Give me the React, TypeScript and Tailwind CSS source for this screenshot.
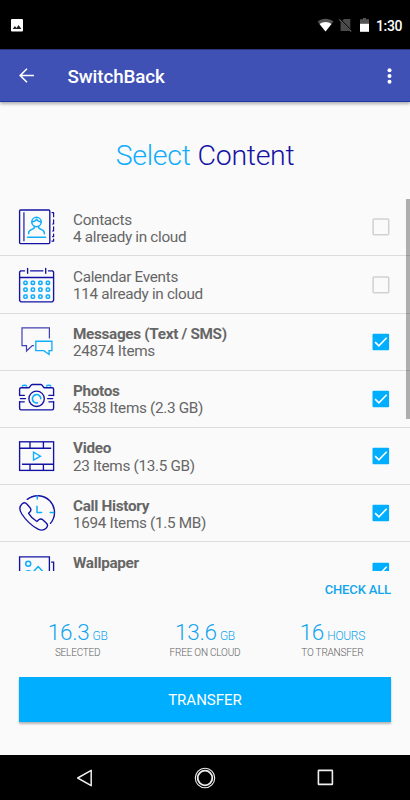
import { useState, type ReactNode } from "react";

const NAVY = "#1212a4";
const SKY = "#12adfb";

function ItemIcon({ children }: { children: ReactNode }) {
  return (
    <svg
      className="h-[38px] w-[38px] shrink-0"
      viewBox="0 0 38 38"
      fill="none"
      stroke={NAVY}
      strokeWidth={1.35}
      strokeLinecap="round"
      strokeLinejoin="round"
    >
      {children}
    </svg>
  );
}

function ContactsIcon() {
  return (
    <ItemIcon>
      <rect x="1.6" y="2" width="30.2" height="33.6" rx="1" />
      <path d="M5.9 4.8v27.8" strokeWidth={1.8} opacity={0.65} />
      <path d="M34 4.6h1.6v4.2M35.6 11.8v4.2h-1M35.6 18.8v4.2h-1M35.6 26v2.6h-1M35.6 31v2.2H34" strokeWidth={1.2} />
      <g stroke={SKY} strokeWidth={1.5}>
        <circle cx="18.5" cy="14" r="4.7" />
        <path d="M14 13.8c2.4 0 3.8-1.1 4.5-2.6.8 1.5 2.2 2.6 4.5 2.6M16.3 18.3v1.5c-.9 1.8-5.6 1.6-5.6 4.6v1.4M20.7 18.3v1.5c.9 1.8 5.6 1.6 5.6 4.6v1.4" />
        <path d="M9.5 29.2h18" />
      </g>
    </ItemIcon>
  );
}

function CalendarIcon() {
  const cols = [7.5, 14.9, 22.4, 29.9];
  const rows = [16.8, 23.6, 30.6];
  return (
    <ItemIcon>
      <path d="M6.6 4.8H2.8L1.6 6v28.6l1.2 1.2h31.6l1.2-1.2V6l-1.2-1.2h-3.9M12.5 4.8h12.4M1.6 11.5h34" />
      <path d="M9.6 2.3v4.9M27.7 2.3v4.9" />
      <g stroke={SKY} strokeWidth={1.6}>
        {rows.map((y) =>
          cols.map((x) => <rect key={`${x}-${y}`} x={x - 1.6} y={y - 1.6} width="3.2" height="3.2" rx="1" />)
        )}
      </g>
    </ItemIcon>
  );
}

function MessagesIcon() {
  return (
    <ItemIcon>
      <path
        d="M31.4 15.6V4.8H4v17.8h4.5V28l5.8-5.4h1.6"
        strokeWidth={1.2}
        strokeLinecap="butt"
        strokeLinejoin="miter"
        opacity={0.8}
      />
      <path d="M17.8 18.2h16.1v9.4h-2.8v3.9l-5.2-3.9h-8.1z" stroke={SKY} strokeLinejoin="miter" />
    </ItemIcon>
  );
}

function PhotosIcon() {
  return (
    <ItemIcon>
      <path d="M1.6 14.8V9.2c0-1 .5-1.5 1.5-1.5h7.6c1.6 0 1.7-3.2 3.6-3.2h8.5c1.9 0 2 3.2 3.6 3.2h7.7c1 0 1.5.5 1.5 1.5v5.6M1.6 22.5v5.8c0 1 .5 1.5 1.5 1.5h31c1 0 1.5-.5 1.5-1.5v-5.8M1.6 14.6v1M1.6 21.6v1M35.6 14.6v1M35.6 21.6v1" />
      <path d="M1.6 15.4h4.7M2.4 18.6h5.1M1.6 21.8h4.7M30.9 15.4h4.7M29.6 18.6h5.1M30.9 21.8h4.7" />
      <circle cx="18.6" cy="18.8" r="7.7" />
      <path d="M19.4 22.9a4.2 4.2 0 1 1 3.4-4.3M4.5 6c.2-1.1 3.8-1.1 4 0M28.7 6c.2-1.1 3.8-1.1 4 0" stroke={SKY} strokeWidth={1.6} />
    </ItemIcon>
  );
}

function VideoIcon() {
  return (
    <ItemIcon>
      <g strokeLinecap="butt" strokeLinejoin="miter">
        <rect x="1.6" y="4.8" width="34" height="28.6" />
        <path d="M1.6 11.2h31.6M4 27.2h31.6M12 4.8v6.4M25.4 4.8v6.4M12 27.2v6.2M25.4 27.2v6.2" />
        <path d="M15.5 15.2v8l7-4z" stroke={SKY} />
      </g>
    </ItemIcon>
  );
}

function CallIcon() {
  return (
    <ItemIcon>
      <path d="M9.2 5.4A16.8 16.8 0 0 1 32.5 29.4" />
      <path d="M4.2 9.8C1 12.6 1.2 16 3.8 20c4.3 6.6 9.7 11.7 16.3 15.2 3.4 1.7 5.8 1.2 8-.9 2-1.9 2-3.3.4-5l-3.2-3c-1.9-1.7-3.7-1.6-5.4.2l-1 1c-3.7-2.2-6.4-5-8.3-8.2l1.2-1.2c1.5-1.5 1.5-3 .1-4.6L8.8 10C7.3 8.3 5.8 8.4 4.2 9.8z" />
      <path d="M19.3 1.9v3M35.6 18.5h-3.4M19 12.2v6.4h4.6" stroke={SKY} strokeWidth={1.5} />
    </ItemIcon>
  );
}

function WallpaperIcon() {
  return (
    <ItemIcon>
      <path d="M1.6 36V4.9h29.8V30H1.6M33.6 10.1h2V36" strokeLinejoin="miter" />
      <g stroke={SKY} strokeWidth={1.5}>
        <circle cx="10.2" cy="11.7" r="2.5" />
        <path d="M7.6 19.6c1.5-1 3.8-1 5.3 0M15.5 19.6l4.7-5.1 5.2 5.6" />
      </g>
    </ItemIcon>
  );
}

const items = [
  { name: "Contacts", detail: "4 already in cloud", icon: <ContactsIcon />, selected: false },
  { name: "Calendar Events", detail: "114 already in cloud", icon: <CalendarIcon />, selected: false },
  { name: "Messages (Text / SMS)", detail: "24874 Items", icon: <MessagesIcon />, selected: true },
  { name: "Photos", detail: "4538 Items (2.3 GB)", icon: <PhotosIcon />, selected: true },
  { name: "Video", detail: "23 Items (13.5 GB)", icon: <VideoIcon />, selected: true },
  { name: "Call History", detail: "1694 Items (1.5 MB)", icon: <CallIcon />, selected: true },
  { name: "Wallpaper", detail: "", icon: <WallpaperIcon />, selected: true },
];

const totals = [
  { value: "16.3", unit: "GB", label: "SELECTED" },
  { value: "13.6", unit: "GB", label: "FREE ON CLOUD" },
  { value: "16", unit: "HOURS", label: "TO TRANSFER" },
];

function StatusBar() {
  return (
    <div className="flex h-[49px] shrink-0 items-center bg-black pt-[1px] pr-[8px] pl-[11px] text-white">
      <svg className="h-[13px] w-[12px]" viewBox="0 0 12 13">
        <rect width="12" height="12.5" rx="1" fill="#fff" />
        <path d="M1.7 10.1l2.2-3 1.6 1.9 2.1-3 2.8 4.1z" fill="#222" />
      </svg>
      <svg className="ml-auto h-[14px] w-[17px]" viewBox="0 0 17 14">
        <path d="M8.5 13.5L.6 3.6c4.7-3.8 11.1-3.8 15.8 0z" fill="#555" />
        <path d="M8.5 13.5L2.5 6c3.6-2.7 8.4-2.7 12 0z" fill="#fff" />
      </svg>
      <svg className="ml-[5px] h-[14px] w-[13px]" viewBox="0 0 13 14">
        <path d="M5 1h6.3v12.1H1.6V4.3z" fill="#4b4b4b" />
        <path d="M.4 1l12 12.4" stroke="#000" strokeWidth={2} />
        <path d="M.2 1.5l12 12" stroke="#606060" strokeWidth={1.1} />
      </svg>
      <svg className="ml-[8px] h-[14px] w-[9px]" viewBox="0 0 9 14">
        <path d="M3 0h3v1.3h3V6H0V1.3h3z" fill="#555" />
        <path d="M0 5.8h9v8H0z" fill="#fff" />
      </svg>
      <span className="ml-[7px] pt-[1px] text-[14px] leading-none font-medium tracking-[-0.4px]">1:30</span>
    </div>
  );
}

function AppBar() {
  return (
    <header className="z-10 flex h-[53px] shrink-0 items-center border-t border-b border-t-[#29377e] border-b-[#2139a5] bg-[#3f51b5] pr-[18px] pl-[19px] text-white shadow-[0_2px_3px_rgba(0,0,0,0.3)]">
      <svg className="h-[15px] w-[15px]" viewBox="0 0 15 15" fill="none" stroke="#fff" strokeWidth={1.6}>
        <path d="M15 7.5H1.5M8 .7L1.2 7.5 8 14.3" />
      </svg>
      <h1 className="ml-[33.5px] pt-[4px] text-[18.8px] leading-none font-medium tracking-[-0.1px]">SwitchBack</h1>
      <svg className="ml-auto h-[16px] w-[5px]" viewBox="0 0 5 16" fill="#fff">
        <circle cx="2.5" cy="2.2" r="2" />
        <circle cx="2.5" cy="8" r="2" />
        <circle cx="2.5" cy="13.8" r="2" />
      </svg>
    </header>
  );
}

function Checkbox({ checked, label, onChange }: { checked: boolean; label: string; onChange: () => void }) {
  return (
    <button className="ml-auto" role="checkbox" aria-checked={checked} aria-label={label} onClick={onChange}>
      <svg className="block h-[18px] w-[18px]" viewBox="0 0 18 18" fill="none">
        {checked ? (
          <>
            <rect x="0.5" y="0.8" width="16.6" height="16.4" rx="1" fill="#00aeff" />
            <path d="M3.1 9.1l3.8 3.8 7.8-8.2" stroke="#fff" strokeWidth={1.6} />
          </>
        ) : (
          <rect x="1.1" y="1.1" width="15.6" height="15.6" rx="1" stroke="#d1d1d1" strokeWidth={1.5} />
        )}
      </svg>
    </button>
  );
}

function NavBar() {
  return (
    <nav className="flex h-[45px] shrink-0 items-center justify-between bg-black pr-[76px] pl-[76px]">
      <svg className="h-[18px] w-[17px]" viewBox="0 0 17 18" fill="none" stroke="#eee" strokeWidth={1.5}>
        <path d="M15.2 1.3v15.4L1.7 9z" strokeLinejoin="round" />
      </svg>
      <svg className="h-[22px] w-[22px]" viewBox="0 0 22 22" fill="none" stroke="#eee">
        <circle cx="11" cy="11" r="9.7" strokeWidth={1.1} />
        <circle cx="11" cy="11" r="7.3" strokeWidth={1.8} />
      </svg>
      <svg className="h-[17px] w-[17px]" viewBox="0 0 17 17" fill="none" stroke="#eee" strokeWidth={1.6}>
        <rect x="1.4" y="1.4" width="14" height="14" rx="0.5" />
      </svg>
    </nav>
  );
}

export default function App() {
  const [selected, setSelected] = useState(items.map((item) => item.selected));

  const toggle = (index: number) => setSelected(selected.map((value, i) => (i === index ? !value : value)));

  return (
    <div className="flex h-[800px] w-[410px] flex-col overflow-hidden bg-[#fafafa] font-[Roboto,sans-serif]">
      <StatusBar />
      <AppBar />

      <h2 className="flex h-[97px] shrink-0 items-center justify-center gap-[7px] pt-[12px] text-[28.5px] leading-none font-light tracking-[-0.3px]">
        <span className="text-[#12adfb]">Select</span>
        <span className="text-[#1212a4]">Content</span>
      </h2>

      <div className="relative h-[372px] shrink-0 overflow-hidden pt-[0.3px]">
        {items.map((item, i) => (
          <div
            key={item.name}
            className="flex h-[57.2px] items-center border-b border-[#dcdcdc] pr-[20px] pl-[18px]"
          >
            {item.icon}
            <div className="ml-[17px] h-[36px] pt-[2.3px] text-[15.3px] leading-[17.2px] tracking-[-0.32px] text-[#666]">
              <p className={selected[i] ? "font-bold" : ""}>{item.name}</p>
              <p>{item.detail}</p>
            </div>
            <Checkbox checked={selected[i]} label={item.name} onChange={() => toggle(i)} />
          </div>
        ))}
        <div className="absolute top-0 right-0 h-[220px] w-[4px] bg-black/30" />
      </div>

      <div className="flex h-[37px] shrink-0 items-center justify-end pr-[19px]">
        <button
          className="text-[13px] leading-none font-medium tracking-[-0.15px] text-[#12a5ee]"
          onClick={() => setSelected(items.map(() => true))}
        >
          CHECK ALL
        </button>
      </div>

      <div className="flex h-[69px] shrink-0 px-[14px] pt-[12px]">
        {totals.map((total) => (
          <div key={total.label} className="flex-1 text-center">
            <p className="text-[22.5px] leading-[24px] font-light tracking-[-0.3px] text-[#12a5ee]">
              {total.value} <span className="-ml-[2px] text-[12px]">{total.unit}</span>
            </p>
            <p className="mt-[-1px] text-[10px] leading-[12px] font-light tracking-[-0.2px] text-[#616161]">{total.label}</p>
          </div>
        ))}
      </div>

      <button className="mx-[19px] h-[45px] shrink-0 bg-[#00aeff] pt-[2px] text-[15px] text-white shadow-[0_2px_2px_rgba(0,0,0,0.28)]">
        TRANSFER
      </button>

      <div className="flex-1" />
      <NavBar />
    </div>
  );
}
